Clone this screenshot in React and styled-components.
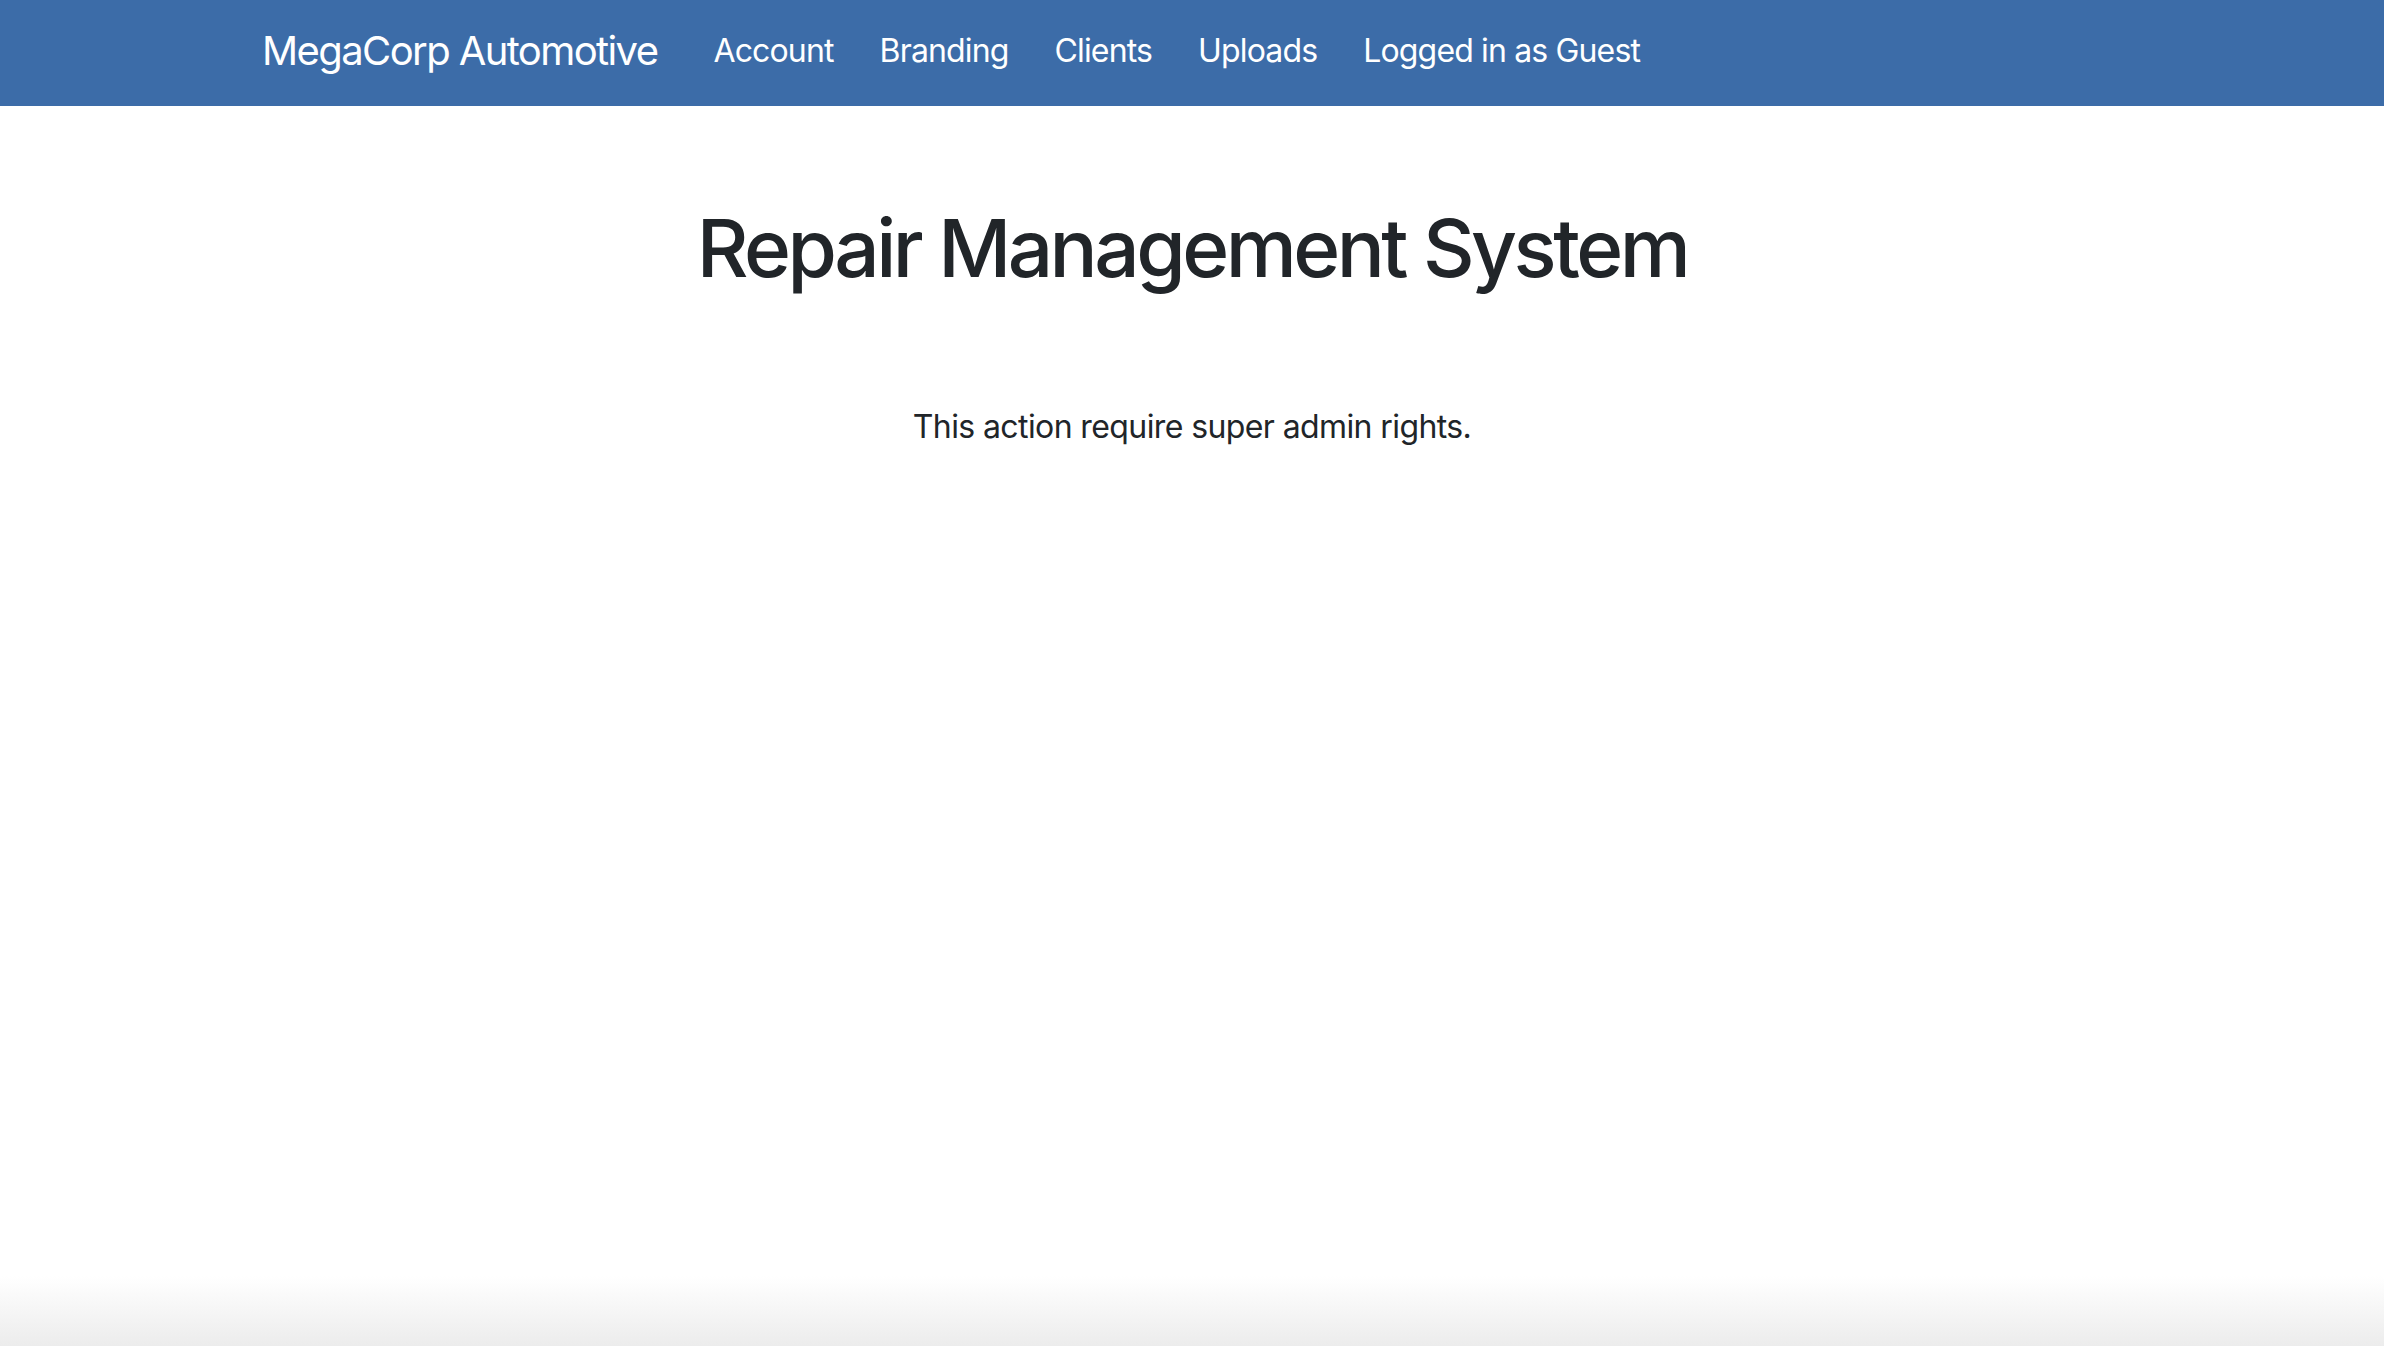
import React from "react";
import styled, { createGlobalStyle } from "styled-components";

const GlobalStyle = createGlobalStyle`
  html, body {
    margin: 0;
    padding: 0;
  }
  body {
    min-height: 100vh;
    font-family: Inter, "Noto Sans", "Liberation Sans", sans-serif;
    color: #212529;
    background: linear-gradient(to bottom, #ffffff 0, #ffffff calc(100% - 70px), #ececec 100%);
    background-attachment: fixed;
  }
`;

const navLinks = ["Account", "Branding", "Clients", "Uploads", "Logged in as Guest"];

const App = () => {
  return (
    <>
      <GlobalStyle />
      <Navbar>
        <Brand href="#">MegaCorp Automotive</Brand>
        <NavList>
          {navLinks.map((item, index) => (
            <NavItem key={index}>
              <NavLink href="#">{item}</NavLink>
            </NavItem>
          ))}
        </NavList>
      </Navbar>
      <Main>
        <Title>Repair Management System</Title>
        <Message>This action require super admin rights.</Message>
      </Main>
    </>
  );
};

const Navbar = styled.nav`
  display: flex;
  align-items: center;
  height: 106px;
  padding: 0 0 6px 262px;
  background: #3c6ca8;
  box-sizing: border-box;
`;

const Brand = styled.a`
  font-size: 40px;
  color: #ffffff;
  text-decoration: none;
  letter-spacing: -1.6px;
  margin-right: 56px;
  white-space: nowrap;
`;

const NavList = styled.ul`
  display: flex;
  gap: 46px;
  list-style: none;
  margin: 0;
  padding: 0;
`;

const NavItem = styled.li``;

const NavLink = styled.a`
  font-size: 32px;
  color: #ffffff;
  text-decoration: none;
  letter-spacing: -0.85px;
  white-space: nowrap;
`;

const Main = styled.main`
  display: flex;
  flex-direction: column;
  align-items: center;
  padding-top: 94px;
`;

const Title = styled.h1`
  font-size: 80px;
  font-weight: 500;
  line-height: 1.2;
  margin: 0 0 107px;
  letter-spacing: -3.5px;
`;

const Message = styled.p`
  font-size: 32px;
  line-height: 1.5;
  margin: 0;
  letter-spacing: -0.6px;
`;

export default App;
